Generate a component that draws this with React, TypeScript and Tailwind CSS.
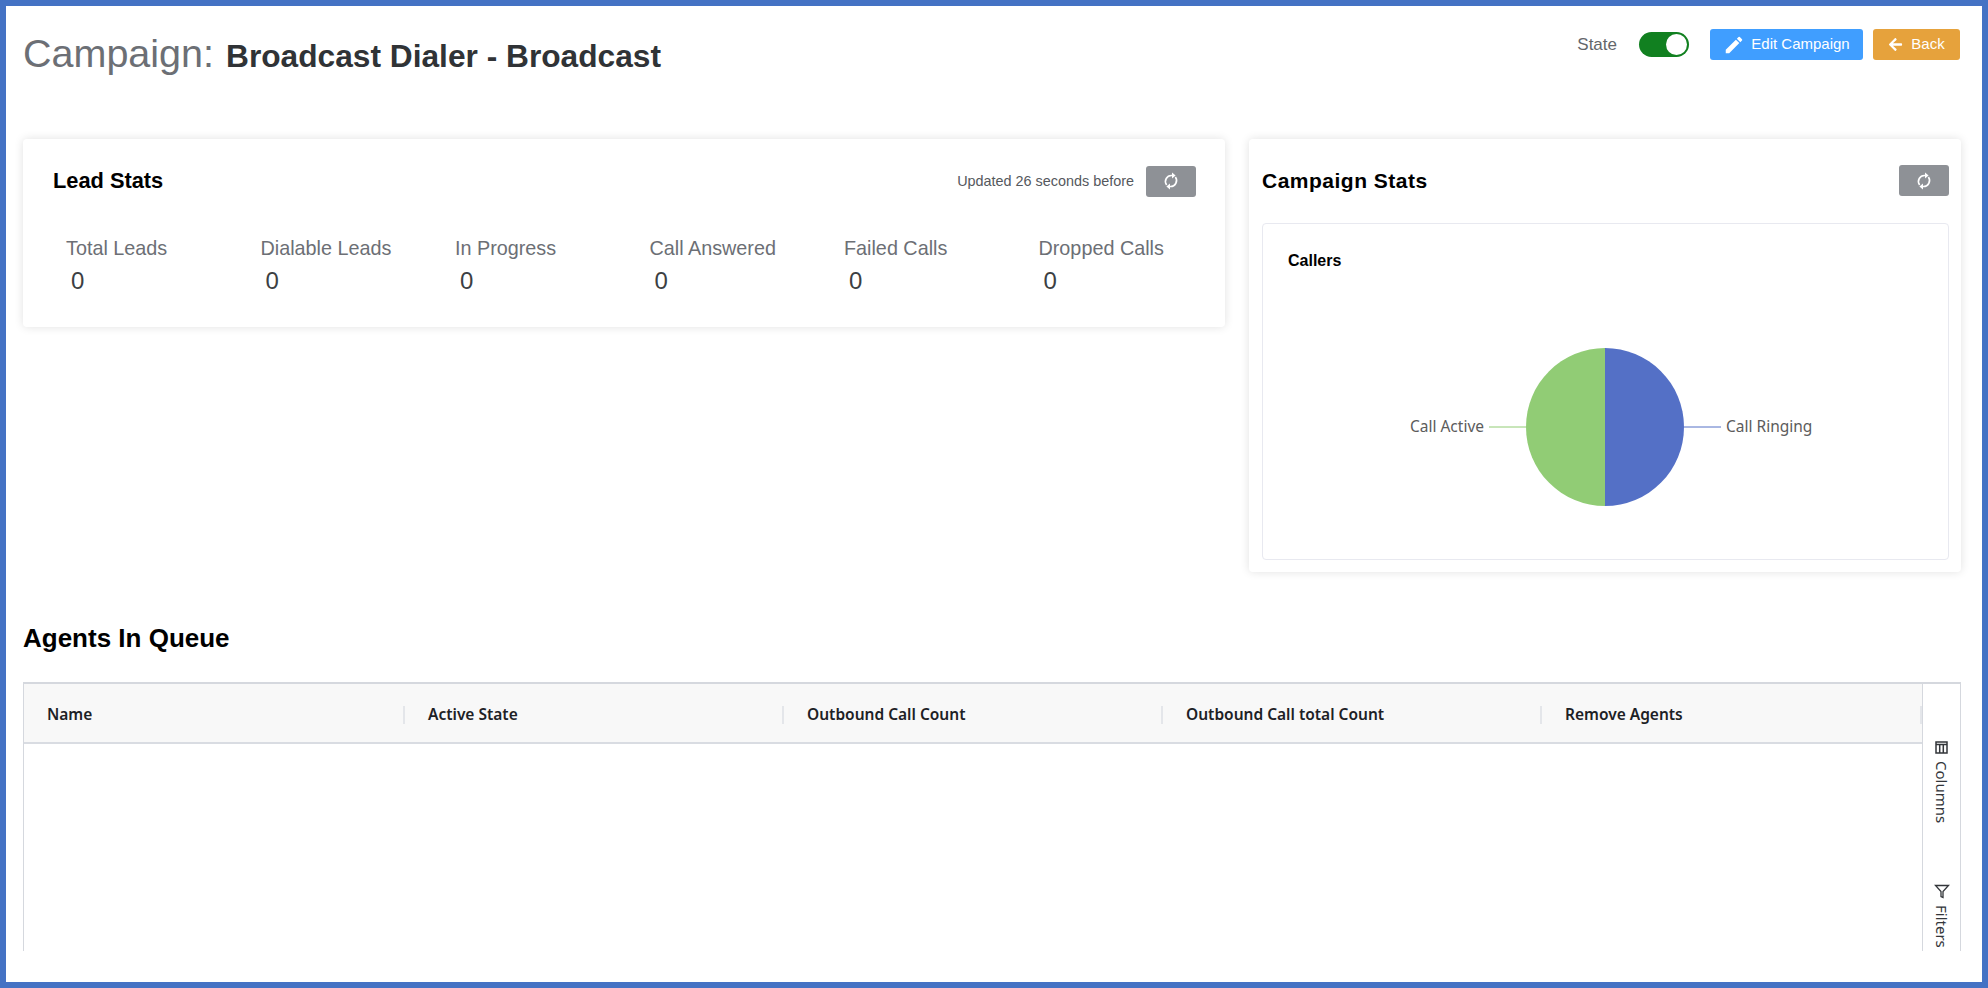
import React from 'react';
import { FaArrowLeft } from 'react-icons/fa';
import { MdEdit } from 'react-icons/md';

const leadStats = ['Total Leads', 'Dialable Leads', 'In Progress', 'Call Answered', 'Failed Calls', 'Dropped Calls'];
const columns = ['Name', 'Active State', 'Outbound Call Count', 'Outbound Call total Count', 'Remove Agents'];

function RefreshButton() {
  return (
    <button className="flex h-[31px] w-[50px] items-center justify-center rounded-[3px] bg-[#8e9196] text-white">
      <svg width="16" height="18" viewBox="0 0 16 18" fill="none" stroke="currentColor" strokeWidth="1.6">
        <path d="M9 3.5A6 6 0 0 0 3.6 13" />
        <path d="M7 14.5A6 6 0 0 0 12.4 5" />
        <path d="M9 0.6L12.6 3.5L9 6.4Z" fill="currentColor" stroke="none" />
        <path d="M7 11.6L3.4 14.5L7 17.4Z" fill="currentColor" stroke="none" />
      </svg>
    </button>
  );
}

function CallersPie() {
  return (
    <svg width="440" height="220" viewBox="0 0 440 220" className="block">
      <path d="M220 31 A79 79 0 0 1 220 189 Z" fill="#5470c6" />
      <path d="M220 31 A79 79 0 0 0 220 189 Z" fill="#91cc75" />
      <path d="M299 110 H336" stroke="#5470c6" fill="none" />
      <path d="M141 110 H104" stroke="#91cc75" fill="none" />
      <text x="341" y="115" fontSize="15.5" fill="#5c5c5c" fontFamily="'Noto Sans', sans-serif">Call Ringing</text>
      <text x="99" y="115" fontSize="15.5" fill="#5c5c5c" textAnchor="end" fontFamily="'Noto Sans', sans-serif">Call Active</text>
    </svg>
  );
}

export default function App() {
  return (
    <div className="h-[988px] w-full overflow-hidden border-[6px] border-[#4472c4] bg-white font-['Liberation_Sans',sans-serif]">
      <div className="flex h-full flex-col overflow-hidden pr-[21px] pb-[31px] pl-[17px]">
        {/* Header */}
        <div className="flex h-[133px] shrink-0 items-start justify-between pr-[1px]">
          <h1 className="mt-[17px] flex items-baseline gap-[12px] text-[39.5px] leading-[60px] font-normal text-[#6c6f75]">
            Campaign:
            <span className="text-[31.7px] font-bold text-[#303336]">Broadcast Dialer - Broadcast</span>
          </h1>
          <div className="mt-[23px] flex items-center">
            <span className="mr-[22px] text-[17px] text-[#63666b]">State</span>
            <div className="mr-[21px] flex h-[25px] w-[50px] items-center justify-end rounded-full bg-[#118020] pr-[2px]">
              <div className="h-[21px] w-[21px] rounded-full bg-white" />
            </div>
            <button className="mr-[10px] flex h-[31px] w-[153px] items-center justify-center gap-[6px] rounded-[3px] bg-[#409eff] text-[15px] text-white">
              <MdEdit className="h-[22px] w-[22px]" />
              Edit Campaign
            </button>
            <button className="flex h-[31px] w-[87px] items-center justify-center gap-[8px] rounded-[3px] bg-[#e6a23c] text-[15px] text-white">
              <FaArrowLeft className="h-[15px] w-[15px]" />
              Back
            </button>
          </div>
        </div>

        {/* Stats cards */}
        <div className="flex h-[433px] shrink-0 items-start justify-between">
          <section className="h-[188px] w-[1202px] rounded-[4px] bg-white pt-[26px] pr-[29px] pl-[30px] shadow-[0_0_10px_rgba(0,0,0,0.12)]">
            <div className="flex items-center justify-between">
              <h2 className="text-[21.8px] font-bold text-black">Lead Stats</h2>
              <div className="flex items-center gap-[12px]">
                <span className="text-[14.4px] text-[#55585d]">Updated 26 seconds before</span>
                <RefreshButton />
              </div>
            </div>
            <div className="mt-[37px] grid grid-cols-[repeat(6,194.5px)] pl-[13px]">
              {leadStats.map((label) => (
                <div key={label}>
                  <div className="text-[19.8px] leading-[26px] text-[#6c6f75]">{label}</div>
                  <div className="mt-[6px] pl-[5px] text-[24px] leading-[28px] text-[#3c3f43]">0</div>
                </div>
              ))}
            </div>
          </section>
          <section className="h-[433px] w-[712px] rounded-[4px] bg-white pt-[26px] pr-[12px] pl-[13px] shadow-[0_0_10px_rgba(0,0,0,0.12)]">
            <div className="flex items-center justify-between">
              <h2 className="text-[21px] font-bold tracking-[0.5px] text-black">Campaign Stats</h2>
              <RefreshButton />
            </div>
            <div className="mt-[26px] h-[337px] rounded-[4px] border border-[#e8e9f0] pt-[27px] pr-[26px] pl-[25px]">
              <h3 className="text-[16px] leading-[20px] font-bold text-black">Callers</h3>
              <div className="mt-[46px] flex justify-center">
                <CallersPie />
              </div>
            </div>
          </section>
        </div>

        {/* Agents table */}
        <h2 className="mt-[50px] text-[26px] leading-[32px] font-bold text-black">Agents In Queue</h2>
        <div className="mt-[28px] flex min-h-0 flex-1 overflow-hidden border-t-2 border-r border-l border-[#d5d8de]">
          <div className="min-w-0 flex-1 font-['Noto_Sans',sans-serif]">
            <div className="grid h-[60px] grid-cols-[repeat(4,379px)_1fr] border-b-2 border-[#d9dce2] bg-[#f8f8f8] pt-[3px]">
              {columns.map((name, i) => (
                <div key={name} className="flex items-center">
                  {i > 0 && <span className="h-[18px] w-[2px] bg-[#e4e6ea]" />}
                  <span className="pl-[23px] text-[15.5px] font-semibold text-[#1d2125]">{name}</span>
                  {i === 4 && <span className="ml-auto h-[18px] w-[2px] bg-[#e4e6ea]" />}
                </div>
              ))}
            </div>
          </div>
          <div className="flex w-[38px] shrink-0 flex-col items-center border-l border-[#d5d8de] pt-[56px] font-['Noto_Sans',sans-serif] text-[15px] text-[#33363a]">
            <div className="flex items-center gap-[6px] [writing-mode:vertical-rl]">
              <svg width="15" height="15" viewBox="0 0 15 15" fill="none" stroke="#33363a" strokeWidth="1.5">
                <rect x="2" y="2" width="11" height="11" />
                <path d="M2 4.5H13M5.7 4.5V13M9.3 4.5V13" />
              </svg>
              Columns
            </div>
            <div className="mt-[60px] flex items-center gap-[6px] [writing-mode:vertical-rl]">
              <svg width="16" height="16" viewBox="0 0 16 16" fill="none" stroke="#33363a" strokeWidth="1.3">
                <path d="M1.5 2.5H14.5L9 8.5V14.5L7 13.5V8.5Z" />
              </svg>
              Filters
            </div>
          </div>
        </div>
      </div>
    </div>
  );
}
